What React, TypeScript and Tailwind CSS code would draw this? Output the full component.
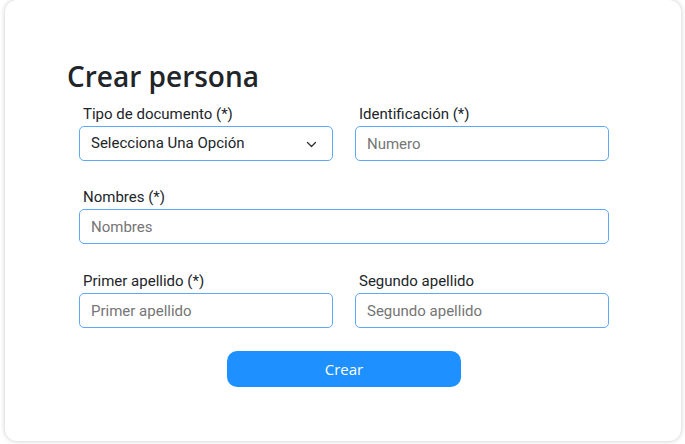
import React from 'react';

const labelCls = "block pl-1 pb-[2px] text-[15px] leading-[20px] text-[#212529]";
const inputCls =
  "block w-full h-[35px] rounded-[5px] border border-[#5ea8f8] bg-white pl-[11px] pr-3 text-[15px] text-[#212529] placeholder:text-[#757575] outline-none";

function Field({ label, placeholder }: { label: string; placeholder: string }) {
  return (
    <div>
      <label className={labelCls}>{label}</label>
      <input className={inputCls} placeholder={placeholder} />
    </div>
  );
}

export default function App() {
  return (
    <div className="min-h-screen bg-white px-[5px]" style={{ fontFamily: 'Roboto, sans-serif' }}>
      <div className="w-[676px] h-[441px] rounded-[12px] bg-white shadow-[0_0_5px_rgba(0,0,0,0.22)] pl-[62px] pr-[72px] pt-[58px]">
        <h1 className="text-[28px] leading-[36px] font-semibold text-[#212529] font-['Open_Sans',sans-serif]">
          Crear persona
        </h1>

        <form className="ml-[12px] w-[530px] mt-[10px]" onSubmit={(e) => e.preventDefault()}>
          <div className="grid grid-cols-2 gap-x-[22px]">
            <div>
              <label className={labelCls}>Tipo de documento (*)</label>
              <div className="relative">
                <select className={`${inputCls} appearance-none`} defaultValue="">
                  <option value="">Selecciona Una Opción</option>
                  <option value="cc">Cédula de ciudadanía</option>
                  <option value="ti">Tarjeta de identidad</option>
                </select>
                <svg
                  className="pointer-events-none absolute right-[16px] top-[15px]"
                  width="11"
                  height="7"
                  viewBox="0 0 11 7"
                  fill="none"
                >
                  <path d="M1.5 1.5l4 4 4-4" stroke="#333" strokeWidth="1.3" strokeLinecap="round" strokeLinejoin="round" />
                </svg>
              </div>
            </div>
            <Field label="Identificación (*)" placeholder="Numero" />
          </div>

          <div className="mt-[26px]">
            <Field label="Nombres (*)" placeholder="Nombres" />
          </div>

          <div className="mt-[27px] grid grid-cols-2 gap-x-[22px]">
            <Field label="Primer apellido (*)" placeholder="Primer apellido" />
            <Field label="Segundo apellido" placeholder="Segundo apellido" />
          </div>

          <button
            type="submit"
            className="mx-auto mt-[23px] block w-[234px] h-[36px] rounded-[10px] bg-[#1e90ff] text-[15px] text-white font-['Open_Sans',sans-serif]"
          >
            Crear
          </button>
        </form>
      </div>
    </div>
  );
}
